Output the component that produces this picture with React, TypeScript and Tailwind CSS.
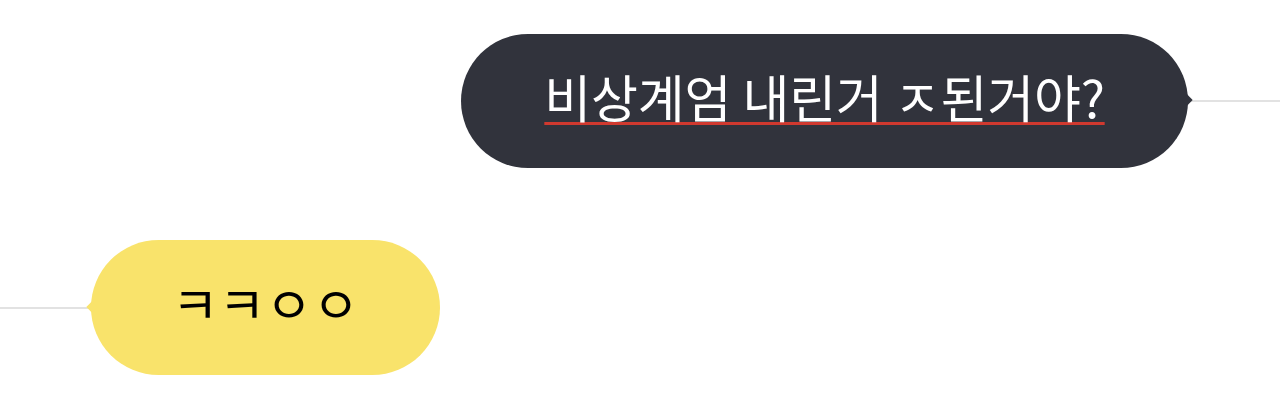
const font = { fontFamily: '"Noto Sans CJK KR", "Noto Sans", sans-serif' }

export default function App() {
  return (
    <div className="w-[1280px] h-[402px] bg-white flex flex-col pt-[34px] gap-[72px]" style={font}>
      {/* sent */}
      <div className="flex items-center justify-end">
        <div className="relative w-[727px] h-[134px] rounded-full bg-[#31333c] flex items-center justify-center">
          <span className="text-white text-[51px] leading-none tracking-[-0.2px] underline decoration-[#d0392f] decoration-[3px] underline-offset-[4px] -mt-[10px]">
            비상계엄 내린거 ㅈ된거야?
          </span>
          <div className="absolute -right-[3px] top-[62px] w-[8px] h-[8px] rotate-45 bg-[#31333c]" />
        </div>
        <div className="w-[92px] h-[2px] bg-[#e2e2e2]" />
      </div>

      {/* received */}
      <div className="flex items-center">
        <div className="w-[91px] h-[2px] bg-[#e2e2e2]" />
        <div className="relative w-[349px] h-[135px] rounded-full bg-[#f9e36b] flex items-center justify-center">
          <div className="absolute -left-[3px] top-[63px] w-[8px] h-[8px] rotate-45 bg-[#f9e36b]" />
          <span className="text-black text-[51px] leading-none -mt-[10px]">ㅋㅋㅇㅇ</span>
        </div>
      </div>
    </div>
  )
}
